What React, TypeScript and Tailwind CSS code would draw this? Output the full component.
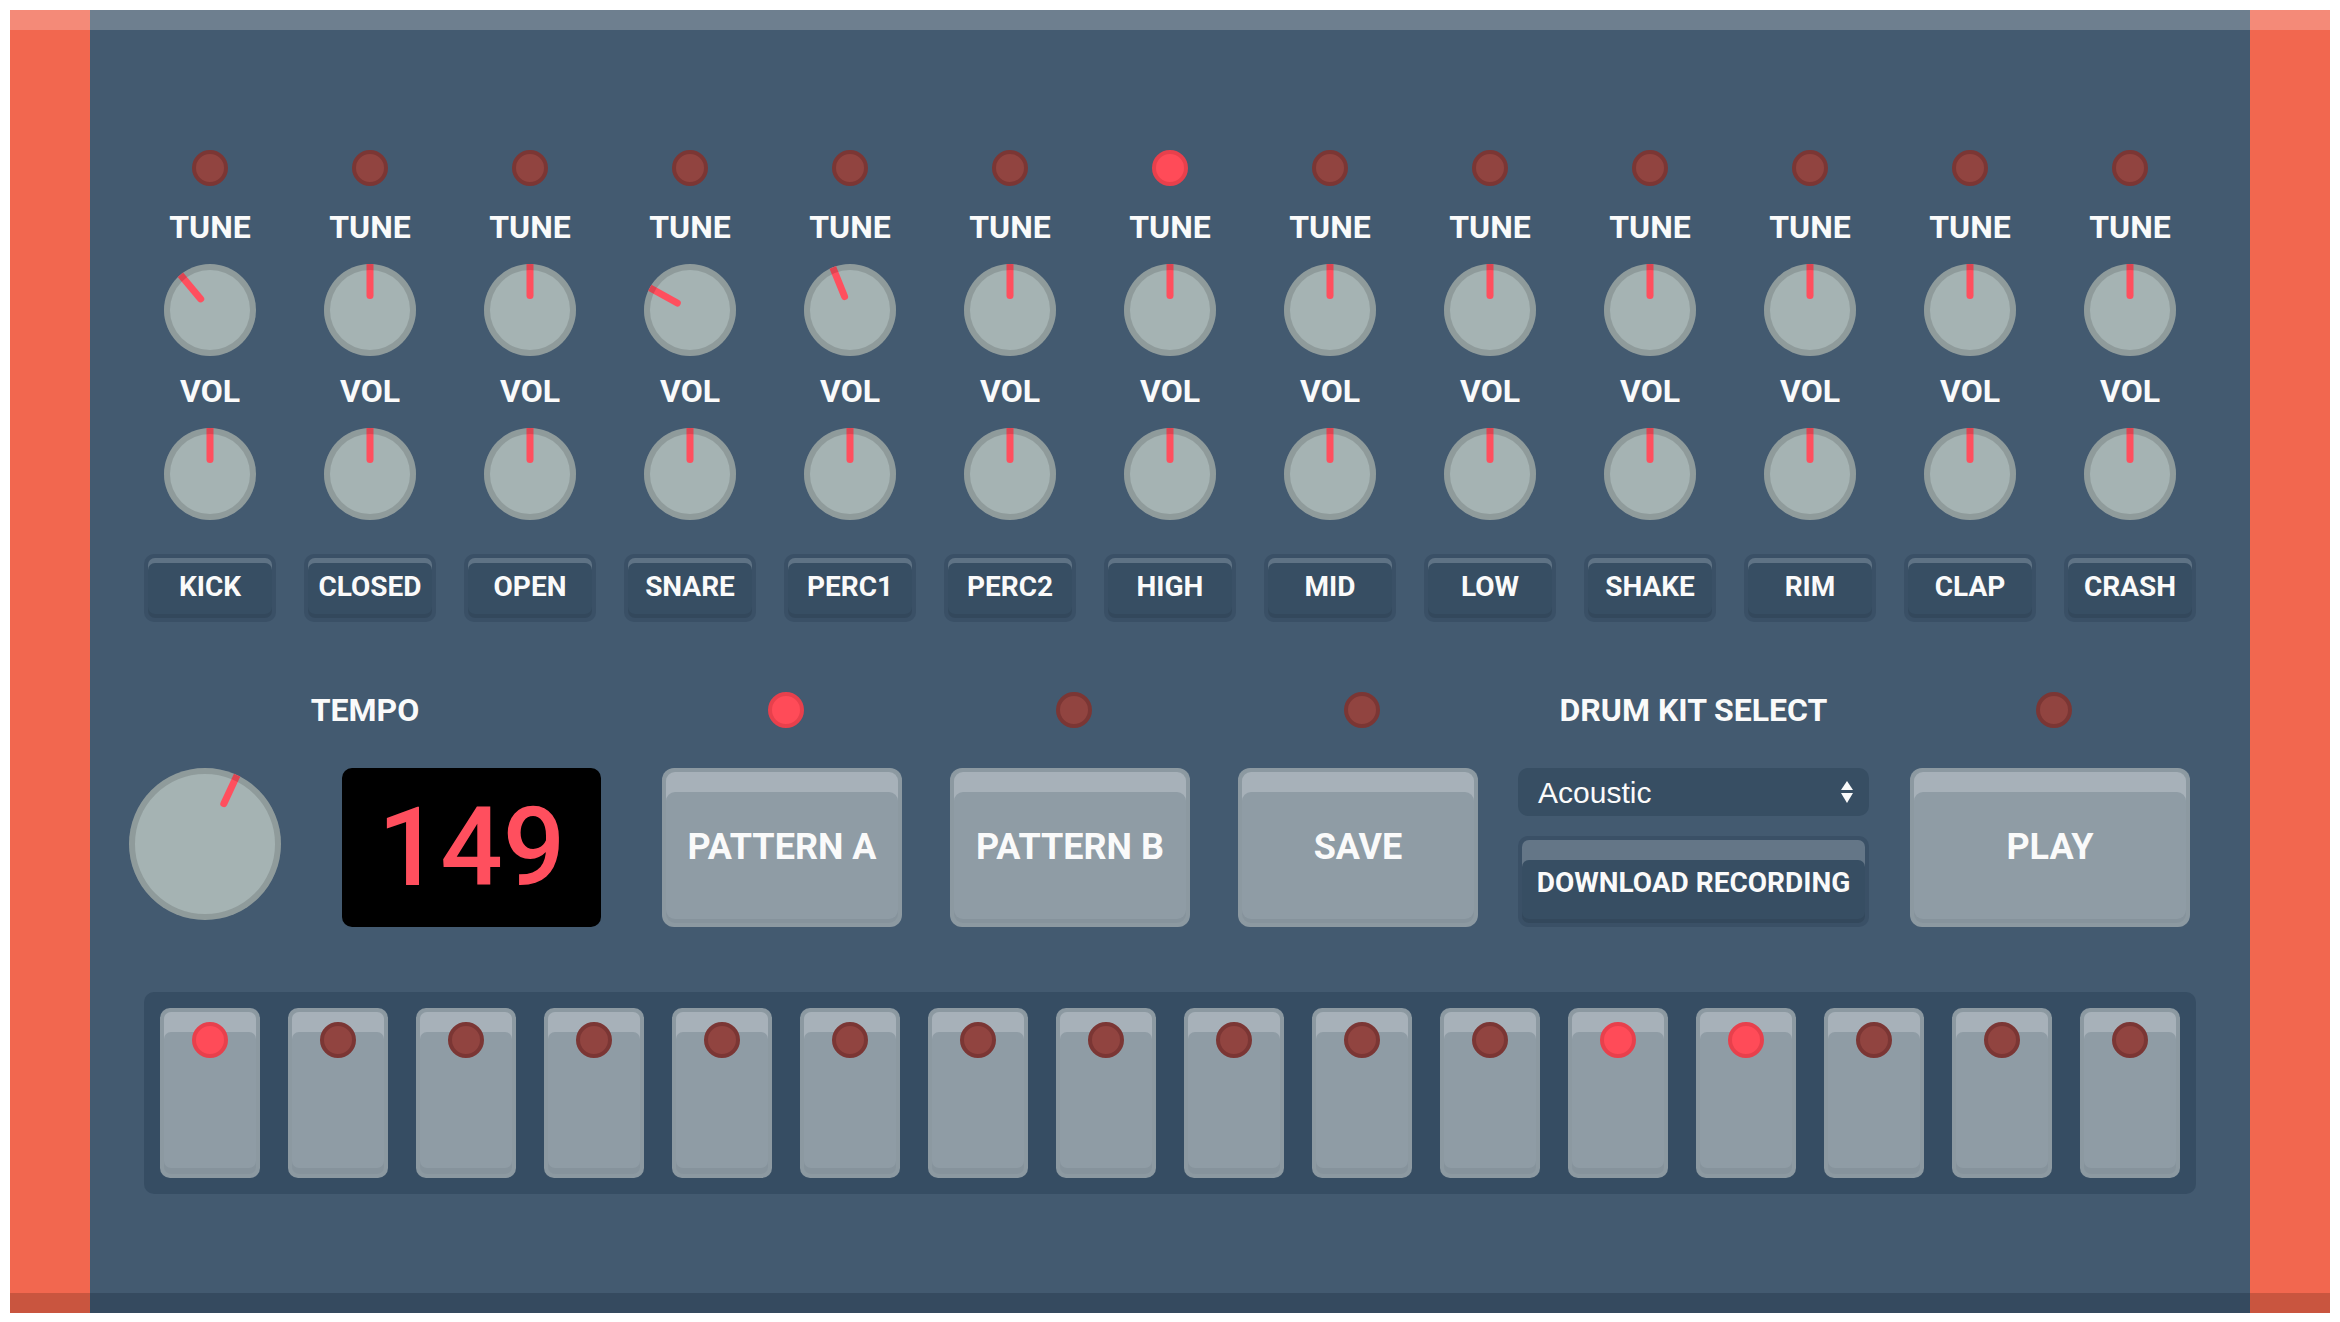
import React from 'react';

const instruments = ['KICK', 'CLOSED', 'OPEN', 'SNARE', 'PERC1', 'PERC2', 'HIGH', 'MID', 'LOW', 'SHAKE', 'RIM', 'CLAP', 'CRASH'];
const tuneAngles = [-40, 0, 0, -61, -22, 0, 0, 0, 0, 0, 0, 0, 0];
const activeSteps = [0, 11, 12];

const Led = ({ on }: { on?: boolean }) => (
  <div
    className={`h-[36px] w-[36px] shrink-0 rounded-full border-[4px] ${
      on ? 'border-[#e8404c] bg-[#ff4b58]' : 'border-[#7b3634] bg-[#914440]'
    }`}
  />
);

const Knob = ({ size, angle }: { size: string; angle: number }) => (
  <div className={`relative shrink-0 rounded-full bg-[#a5b3b3] ${size}`}>
    <div className="absolute inset-0" style={{ transform: `rotate(${angle}deg)` }}>
      <div className="absolute left-1/2 top-0 h-[35px] w-[7px] -translate-x-1/2 rounded-b-full bg-[#ff4f5e]" />
    </div>
    <div className="absolute inset-0 rounded-full shadow-[inset_0_0_0_6px_rgba(0,0,0,0.13)]" />
  </div>
);

const Label = ({ children }: { children: React.ReactNode }) => (
  <div className="h-[40px] whitespace-nowrap text-center text-[32px] font-bold leading-[40px] text-[#fafafa]">
    {children}
  </div>
);

// led over a transport button, sits a few px right of centre like the original
const TopLed = ({ on }: { on?: boolean }) => (
  <div className="ml-[8px] flex h-[40px] items-center">
    <Led on={on} />
  </div>
);

const InstrumentButton = ({ name }: { name: string }) => (
  <div className="mt-[34px] h-[68px] w-[132px] rounded-[10px] bg-[#3a5066] p-[4px]">
    <div className="flex h-full flex-col rounded-[7px] bg-[linear-gradient(#5f7385_50%,#33485c_50%)]">
      <div className="mb-[4px] mt-[5px] flex flex-1 items-center justify-center rounded-[7px] bg-[#374e63] pb-[3px] text-[28px] font-bold text-[#fafafa]">
        {name}
      </div>
    </div>
  </div>
);

const BigButton = ({ label, width }: { label: string; width: string }) => (
  <div className={`mt-[38px] h-[159px] rounded-[12px] bg-[#8c99a1] p-[4px] ${width}`}>
    <div className="flex h-full flex-col rounded-[9px] bg-[linear-gradient(#a7b1b9_50%,#86939c_50%)]">
      <div className="mb-[4px] mt-[20px] flex flex-1 items-center justify-center rounded-[9px] bg-[#8f9ca5] pb-[17px] text-[36px] font-bold text-[#fafafa]">
        {label}
      </div>
    </div>
  </div>
);

const Pad = ({ on }: { on: boolean }) => (
  <div className="relative h-[170px] w-[100px] rounded-[10px] bg-[#8c99a1] p-[4px]">
    <div className="flex h-full flex-col rounded-[7px] bg-[linear-gradient(#a7b1b9_50%,#86939c_50%)]">
      <div className="mb-[6px] mt-[20px] flex-1 rounded-[7px] bg-[#8f9ca5]" />
    </div>
    <div className="absolute left-1/2 top-[14px] -translate-x-1/2">
      <Led on={on} />
    </div>
  </div>
);

export default function App() {
  return (
    <div className="bg-white p-[10px] pb-[9px] font-[Roboto,sans-serif]">
      <div className="flex h-[1303px]">
        <div className="w-[80px] border-b-[20px] border-t-[20px] border-b-[#c9553f] border-t-[#f48a78] bg-[#f2674f]" />

        <div className="flex flex-1 flex-col border-b-[20px] border-t-[20px] border-b-[#354a5f] border-t-[#6e7f8f] bg-[#435a70]">
          {/* instrument channels */}
          <div className="flex px-[40px] pt-[120px]">
            {instruments.map((name, i) => (
              <div key={name} className="flex w-[160px] flex-col items-center">
                <Led on={i === 6} />
                <div className="mt-[21px]">
                  <Label>TUNE</Label>
                </div>
                <div className="mt-[17px]">
                  <Knob size="h-[92px] w-[92px]" angle={tuneAngles[i]} />
                </div>
                <div className="mt-[15px]">
                  <Label>VOL</Label>
                </div>
                <div className="mt-[17px]">
                  <Knob size="h-[92px] w-[92px]" angle={0} />
                </div>
                <InstrumentButton name={name} />
              </div>
            ))}
          </div>

          {/* transport */}
          <div className="mt-[68px] flex items-start pl-[39px]">
            <div className="flex flex-col items-center">
              <Label>TEMPO</Label>
              <div className="mt-[38px] flex gap-[61px]">
                <Knob size="h-[152px] w-[152px]" angle={25} />
                <div className="flex h-[159px] w-[259px] items-center justify-center rounded-[10px] bg-black text-[110px] font-medium leading-none text-[#ff4f5e]">
                  149
                </div>
              </div>
            </div>

            <div className="ml-[61px] flex flex-col items-center">
              <TopLed on />
              <BigButton label="PATTERN A" width="w-[240px]" />
            </div>
            <div className="ml-[48px] flex flex-col items-center">
              <TopLed />
              <BigButton label="PATTERN B" width="w-[240px]" />
            </div>
            <div className="ml-[48px] flex flex-col items-center">
              <TopLed />
              <BigButton label="SAVE" width="w-[240px]" />
            </div>

            <div className="ml-[40px] flex w-[351px] flex-col">
              <Label>DRUM KIT SELECT</Label>
              <div className="mt-[38px] flex h-[48px] items-center justify-between rounded-[10px] bg-[#374e63] pl-[20px] pr-[16px]">
                <span className="font-['Liberation_Sans',Arial,sans-serif] text-[30px] text-[#fafafa]">Acoustic</span>
                <svg width="12" height="22" viewBox="0 0 12 22" fill="#fafafa">
                  <polygon points="6,0 12,9 0,9" />
                  <polygon points="0,12 12,12 6,22" />
                </svg>
              </div>
              <div className="mt-[20px] h-[91px] rounded-[10px] bg-[#3a5066] p-[4px]">
                <div className="flex h-full flex-col rounded-[7px] bg-[linear-gradient(#647687_50%,#33485c_50%)]">
                  <div className="mb-[4px] mt-[20px] flex flex-1 items-center justify-center rounded-[7px] bg-[#374e63] pb-[13px] text-[28px] font-bold text-[#fafafa]">
                    DOWNLOAD RECORDING
                  </div>
                </div>
              </div>
            </div>

            <div className="ml-[41px] flex flex-col items-center">
              <TopLed />
              <BigButton label="PLAY" width="w-[280px]" />
            </div>
          </div>

          {/* step sequencer */}
          <div className="mx-auto mt-[65px] flex w-[2052px] gap-[28px] rounded-[10px] bg-[#364d63] p-[16px]">
            {Array.from({ length: 16 }).map((_, i) => (
              <Pad key={i} on={activeSteps.includes(i)} />
            ))}
          </div>
        </div>

        <div className="w-[80px] border-b-[20px] border-t-[20px] border-b-[#c9553f] border-t-[#f48a78] bg-[#f2674f]" />
      </div>
    </div>
  );
}
